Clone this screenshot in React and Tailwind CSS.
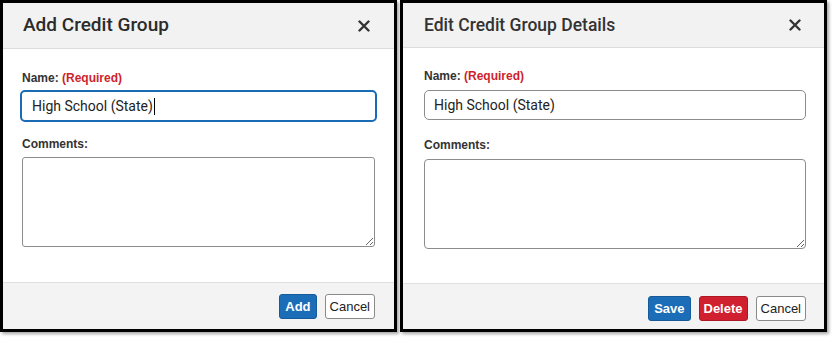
const CloseIcon = () => (
  <svg width="12" height="12" viewBox="0 0 12 12" className="text-[#333]">
    <path d="M1.5 1.5 L10.5 10.5 M10.5 1.5 L1.5 10.5" stroke="currentColor" strokeWidth="2.4" strokeLinecap="round" />
  </svg>
);

const Label = ({ children, required }) => (
  <div className="text-[12px] leading-[16px] font-bold text-[#333] font-['Liberation_Sans',Arial,sans-serif]">
    {children}
    {required && <span className="text-[#cf1f2c]"> (Required)</span>}
  </div>
);

const Btn = ({ kind, children }) => {
  const styles = {
    blue: 'bg-[#1c6db8] border-[#175a99] text-white font-bold px-[5px]',
    red: 'bg-[#d02030] border-[#ad1825] text-white font-bold px-[4px]',
    plain: 'bg-white border-[#8a8a8a] text-[#222] px-[4px]',
  };
  return (
    <button className={`h-[25px] rounded-[3px] border text-[13px] font-['Liberation_Sans',Arial,sans-serif] ${styles[kind]}`}>
      {children}
    </button>
  );
};

export default function App() {
  return (
    <div className="h-[340px] w-[837px] bg-white flex gap-[3px] font-['Roboto',sans-serif]">
      {/* add dialog */}
      <div className="w-[397px] h-[332px] border-[3px] border-black bg-white flex flex-col shadow-[2px_2px_3px_rgba(0,0,0,0.35)]">
        <div className="h-[46px] shrink-0 bg-[#f2f2f2] border-b border-[#dcdcdc] flex items-center justify-between pl-[20px] pr-[24px]">
          <h2 className="text-[19px] font-medium text-[#2b2b2b]">Add Credit Group</h2>
          <CloseIcon />
        </div>
        <div className="flex-1 pt-[21px] px-[19px]">
          <Label required>Name:</Label>
          <div className="mt-[4px] -mx-[2px] h-[32px] rounded-[5px] border-2 border-[#1a6bb5] flex items-center px-[10px] text-[14px] text-[#222]">
            High School (State)<span className="inline-block w-px h-[17px] bg-black ml-px"></span>
          </div>
          <div className="mt-[14px]">
            <Label>Comments:</Label>
          </div>
          <textarea className="mt-[5px] block w-full h-[90px] rounded-[3px] border border-[#8c8c8c] outline-none"></textarea>
        </div>
        <div className="h-[47px] shrink-0 bg-[#f3f3f3] border-t border-[#dedede] flex items-center justify-end gap-[8px] pr-[19px] pt-px">
          <Btn kind="blue">Add</Btn>
          <Btn kind="plain">Cancel</Btn>
        </div>
      </div>

      {/* edit dialog */}
      <div className="w-[427px] h-[332px] border-[3px] border-black bg-white flex flex-col shadow-[2px_2px_3px_rgba(0,0,0,0.35)]">
        <div className="h-[45px] shrink-0 bg-[#f2f2f2] border-b border-[#dcdcdc] flex items-center justify-between pl-[21px] pr-[23px]">
          <h2 className="text-[17.5px] font-medium text-[#333]">Edit Credit Group Details</h2>
          <CloseIcon />
        </div>
        <div className="flex-1 pt-[20px] pl-[21px] pr-[18px]">
          <Label required>Name:</Label>
          <div className="mt-[6px] h-[30px] rounded-[5px] border border-[#8c8c8c] flex items-center px-[9px] text-[14px] text-[#222]">
            High School (State)
          </div>
          <div className="mt-[17px]">
            <Label>Comments:</Label>
          </div>
          <textarea className="mt-[6px] block w-full h-[90px] rounded-[4px] border border-[#8c8c8c] outline-none"></textarea>
        </div>
        <div className="h-[46px] shrink-0 bg-[#f3f3f3] border-t border-[#e0e0e0] flex items-center justify-end gap-[8px] pr-[18px] pt-[4px]">
          <Btn kind="blue">Save</Btn>
          <Btn kind="red">Delete</Btn>
          <Btn kind="plain">Cancel</Btn>
        </div>
      </div>
    </div>
  );
}
